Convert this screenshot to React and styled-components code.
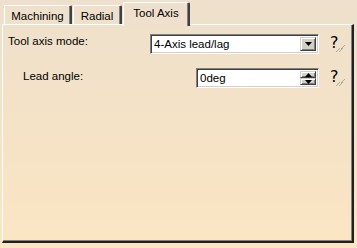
import styled, { createGlobalStyle } from 'styled-components'

const Global = createGlobalStyle`
  html, body { margin: 0; padding: 0; }
  body {
    width: 357px;
    height: 248px;
    overflow: hidden;
    font-family: "Liberation Sans", Arial, sans-serif;
    font-size: 11px;
    color: #000;
  }
`

const Window = styled.div`
  width: 357px;
  height: 248px;
  box-sizing: border-box;
  background: linear-gradient(180deg, #eee0cc 0%, #f6e3c6 60%, #fbe6c3 100%);
  display: flex;
  flex-direction: column;
  padding: 2px 3px 5px 2px;
`

const TabBar = styled.div`
  display: flex;
  align-items: flex-end;
  height: 22px;
  padding-left: 2px;
  position: relative;
  z-index: 1;
`

const Tab = styled.div`
  box-sizing: border-box;
  width: ${p => p.$w}px;
  height: ${p => (p.$active ? 24 : 19)}px;
  margin-bottom: ${p => (p.$active ? -2 : 0)}px;
  display: flex;
  align-items: center;
  justify-content: center;
  padding-top: ${p => (p.$active ? 0 : 1)}px;
  padding-bottom: ${p => (p.$active ? 3 : 0)}px;
  margin-right: 1px;
  background: ${p => (p.$active ? '#eee0cc' : 'transparent')};
  border-top: 1px solid #fff;
  border-left: 1px solid #fff;
  border-right: 2px solid #404040;
  box-shadow: inset -1px 0 0 #808080;
  border-top-left-radius: 2px;
  border-top-right-radius: 2px;
  font-size: 11.5px;
`

const Panel = styled.div`
  flex: 1;
  box-sizing: border-box;
  border-top: 1px solid #fff;
  border-left: 1px solid #fff;
  border-right: 2px solid #202020;
  border-bottom: 2px solid #202020;
  box-shadow: inset -1px -1px 0 #808080;
  padding: 9px 8px 0 5px;
  display: flex;
  flex-direction: column;
  gap: 14px;
`

const Row = styled.div`
  display: flex;
  align-items: center;
  height: 20px;
  padding-left: ${p => p.$indent || 0}px;
`

const Label = styled.div`
  flex: 1;
  font-size: 11.5px;
  margin-top: ${p => p.$dy || 0}px;
`

const Field = styled.div`
  box-sizing: border-box;
  width: ${p => p.$w}px;
  height: ${p => p.$h || 20}px;
  background: #fff;
  border-top: 1px solid #808080;
  border-left: 1px solid #808080;
  border-right: 1px solid #fff;
  border-bottom: 1px solid #fff;
  box-shadow: inset 1px 1px 0 #404040, inset -1px -1px 0 #d4d0c8;
  display: flex;
  align-items: stretch;
  padding: 2px;
`

const Value = styled.div`
  flex: 1;
  display: flex;
  align-items: center;
  padding-left: 1px;
  font-size: 11.5px;
`

const DropButton = styled.div`
  width: 16px;
  box-sizing: border-box;
  background: #d4d0c8;
  border-top: 1px solid #d4d0c8;
  border-left: 1px solid #d4d0c8;
  border-right: 1px solid #404040;
  border-bottom: 1px solid #404040;
  box-shadow: inset 1px 1px 0 #fff, inset -1px -1px 0 #808080;
  display: flex;
  align-items: center;
  justify-content: center;
`

const Spin = styled.div`
  width: 16px;
  display: flex;
  flex-direction: column;
`

const SpinButton = styled(DropButton)`
  width: 16px;
  flex: 1;
`

const Help = styled.div`
  width: 14px;
  margin-left: 11px;
  position: relative;
  font-size: 16px;
  font-family: "DejaVu Sans", sans-serif;
  line-height: 16px;
  height: 16px;
  margin-top: -3px;
`

const Hatch = styled.svg`
  position: absolute;
  left: 6px;
  top: 10px;
`

const Arrow = ({ up }) => (
  <svg width="7" height="4" viewBox="0 0 7 4">
    <path d={up ? 'M3.5 0 L7 4 L0 4 Z' : 'M0 0 L7 0 L3.5 4 Z'} fill="#000" />
  </svg>
)

const HelpMark = () => (
  <Help>
    ?
    <Hatch width="9" height="7" viewBox="0 0 9 7">
      <path d="M0 7 L4 3 M3 7 L7 3 M5 4 L9 0" stroke="#a8a8a8" strokeWidth="1" />
    </Hatch>
  </Help>
)

export default function App() {
  return (
    <>
      <Global />
      <Window>
        <TabBar>
          <Tab $w={68}>Machining</Tab>
          <Tab $w={49}>Radial</Tab>
          <Tab $w={67} $active>Tool Axis</Tab>
        </TabBar>
        <Panel>
          <Row>
            <Label $dy={-6}>Tool axis mode:</Label>
            <Field $w={169}>
              <Value>4-Axis lead/lag</Value>
              <DropButton>
                <Arrow />
              </DropButton>
            </Field>
            <HelpMark />
          </Row>
          <Row $indent={15}>
            <Label $dy={-5}>Lead angle:</Label>
            <Field $w={123}>
              <Value>0deg</Value>
              <Spin>
                <SpinButton>
                  <Arrow up />
                </SpinButton>
                <SpinButton>
                  <Arrow />
                </SpinButton>
              </Spin>
            </Field>
            <HelpMark />
          </Row>
        </Panel>
      </Window>
    </>
  )
}
